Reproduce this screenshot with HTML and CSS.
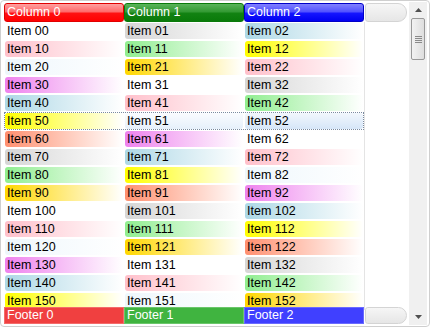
FILE: index.html
```html
<!DOCTYPE html>
<html>
<head>
<meta charset="utf-8">
<link rel="stylesheet" href="styles.css">
</head>
<body>
<div class="grid">
  <div class="main">
    <div class="header">
      <div class="hcell h-red">Column 0</div>
      <div class="hcell h-green">Column 1</div>
      <div class="hcell h-blue">Column 2</div>
      <div class="hfill"></div>
    </div>
    <div class="body">
      <div class="rows">
        <div class="row"><div class="cell">Item 00</div><div class="cell c-gray">Item 01</div><div class="cell c-blue">Item 02</div></div>
        <div class="row"><div class="cell c-pink">Item 10</div><div class="cell c-green">Item 11</div><div class="cell c-yellow">Item 12</div></div>
        <div class="row"><div class="cell c-azure">Item 20</div><div class="cell c-gold">Item 21</div><div class="cell c-pink">Item 22</div></div>
        <div class="row"><div class="cell c-violet">Item 30</div><div class="cell">Item 31</div><div class="cell c-gray">Item 32</div></div>
        <div class="row"><div class="cell c-blue">Item 40</div><div class="cell c-pink">Item 41</div><div class="cell c-green">Item 42</div></div>
        <div class="row focus"><div class="cell c-yellow">Item 50</div><div class="cell c-sel1">Item 51</div><div class="cell c-sel">Item 52</div></div>
        <div class="row"><div class="cell c-salmon">Item 60</div><div class="cell c-violet">Item 61</div><div class="cell">Item 62</div></div>
        <div class="row"><div class="cell c-gray">Item 70</div><div class="cell c-blue">Item 71</div><div class="cell c-pink">Item 72</div></div>
        <div class="row"><div class="cell c-green">Item 80</div><div class="cell c-yellow">Item 81</div><div class="cell c-azure">Item 82</div></div>
        <div class="row"><div class="cell c-gold">Item 90</div><div class="cell c-salmon">Item 91</div><div class="cell c-violet">Item 92</div></div>
        <div class="row"><div class="cell">Item 100</div><div class="cell c-gray">Item 101</div><div class="cell c-blue">Item 102</div></div>
        <div class="row"><div class="cell c-pink">Item 110</div><div class="cell c-green">Item 111</div><div class="cell c-yellow">Item 112</div></div>
        <div class="row"><div class="cell c-azure">Item 120</div><div class="cell c-gold">Item 121</div><div class="cell c-salmon">Item 122</div></div>
        <div class="row"><div class="cell c-violet">Item 130</div><div class="cell">Item 131</div><div class="cell c-gray">Item 132</div></div>
        <div class="row"><div class="cell c-blue">Item 140</div><div class="cell c-pink">Item 141</div><div class="cell c-green">Item 142</div></div>
        <div class="row"><div class="cell c-yellow">Item 150</div><div class="cell c-azure">Item 151</div><div class="cell c-gold">Item 152</div></div>
      </div>
      <div class="vline"></div>
    </div>
    <div class="footer">
      <div class="fcell f-red">Footer 0</div>
      <div class="fcell f-green">Footer 1</div>
      <div class="fcell f-blue">Footer 2</div>
      <div class="hfill ffill"></div>
    </div>
  </div>
  <div class="vscroll">
    <div class="arrow">
      <svg width="7" height="4" viewBox="0 0 7 4"><path d="M0 4 L3.5 0 L7 4 Z" fill="#505050"/></svg>
    </div>
    <div class="thumb">
      <svg width="7" height="7" viewBox="0 0 7 7"><path d="M0 0.5H7M0 2.5H7M0 4.5H7M0 6.5H7" stroke="#8a8a8a" stroke-width="1"/></svg>
    </div>
    <div class="track"></div>
    <div class="arrow">
      <svg width="7" height="4" viewBox="0 0 7 4"><path d="M0 0 L3.5 4 L7 0 Z" fill="#505050"/></svg>
    </div>
  </div>
</div>
</body>
</html>
```
FILE: styles.css
```css
html, body {
  margin: 0;
  padding: 0;
  background: #fff;
}
body {
  font-family: "Liberation Sans", Arial, sans-serif;
  font-size: 12.5px;
  color: #000;
}
.grid {
  width: 430px;
  height: 327px;
  box-sizing: border-box;
  border: 1px solid #cfcfcf;
  border-radius: 4px;
  display: flex;
  background: #fff;
  overflow: hidden;
}
.main {
  flex: 1;
  display: flex;
  flex-direction: column;
  padding: 2px 0 2px 3px;
  min-width: 0;
}
.header {
  display: flex;
  height: 19px;
  flex: none;
}
.hcell {
  width: 120px;
  box-sizing: border-box;
  color: #fff;
  padding-left: 2px;
  line-height: 17px;
  border: 1px solid;
  border-radius: 3px;
}
.h-red {
  border-color: #e00000;
  background: linear-gradient(#ffa0a0 0%, #ff6a6a 45%, #ff1010 55%, #ff0000 100%);
}
.h-green {
  border-color: #0a7a0a;
  background: linear-gradient(#5ab45a 0%, #349a34 45%, #128212 55%, #0a7a0a 100%);
}
.h-blue {
  border-color: #0000c8;
  background: linear-gradient(#8080ff 0%, #5252ff 45%, #1414ff 55%, #0000f0 100%);
}
.hfill {
  flex: 1;
  margin-left: 1px;
  border: 1px solid #d4d4d4;
  border-radius: 3px 9px 9px 3px;
  background: linear-gradient(#f6f6f6, #e6e6e6);
}
.body {
  flex: 1;
  overflow: hidden;
  position: relative;
  min-height: 0;
}
.vline {
  position: absolute;
  left: 360px;
  top: 0;
  bottom: 0;
  width: 1px;
  background: #e4e4e4;
}
.rows {
  display: flex;
  flex-direction: column;
}
.row {
  display: flex;
  height: 18px;
  flex: none;
  box-sizing: border-box;
  width: 360px;
}
.row.focus {
  outline: 1px dotted #7a8aa0;
  outline-offset: -1px;
}
.cell {
  width: 118px;
  margin: 1px;
  box-sizing: border-box;
  border-radius: 3px;
  padding-left: 2px;
  line-height: 16px;
  white-space: nowrap;
}
.c-gray   { background: linear-gradient(to right, #d6d6d6, #fff); }
.c-blue   { background: linear-gradient(to right, #add8e6, #fff); }
.c-pink   { background: linear-gradient(to right, #ffc0cb, #fff); }
.c-green  { background: linear-gradient(to right, #90ee90, #fff); }
.c-yellow { background: linear-gradient(to right, #ffff00, #fff); }
.c-gold   { background: linear-gradient(to right, #ffd700, #fff); }
.c-salmon { background: linear-gradient(to right, #ff9070, #fff); }
.c-violet { background: linear-gradient(to right, #ee82ee, #fff); }
.c-azure  { background: linear-gradient(to right, #eef7fc, #fff); }
.c-sel1   { background: linear-gradient(#fafcff, #e6f0fb); }
.c-sel    { background: linear-gradient(#f2f7fd, #d6e6f8); }
.footer {
  display: flex;
  height: 17px;
  flex: none;
  margin-top: -3px;
  position: relative;
}
.fcell {
  width: 120px;
  box-sizing: border-box;
  color: #fff;
  padding-left: 2px;
  line-height: 15px;
  border: 1px solid #fff;
}
.f-red   { background: #f04040; border-color: #f46a6a; }
.f-green { background: #40b440; border-color: #6ac66a; }
.f-blue  { background: #4040ff; border-color: #6a6aff; }
.ffill {
  border-radius: 3px 9px 9px 3px;
}
.vscroll {
  width: 18px;
  margin: 1px 2px 1px 2px;
  display: flex;
  flex-direction: column;
  align-items: center;
  background: #f0f0f0;
}
.arrow {
  height: 16px;
  width: 100%;
  display: flex;
  align-items: center;
  justify-content: center;
  flex: none;
}
.thumb {
  width: 14px;
  height: 42px;
  box-sizing: border-box;
  border: 1px solid #999;
  border-radius: 2px;
  background: linear-gradient(to right, #f2f2f2, #dedede);
  display: flex;
  align-items: center;
  justify-content: center;
  flex: none;
}
.track {
  flex: 1;
}
```
